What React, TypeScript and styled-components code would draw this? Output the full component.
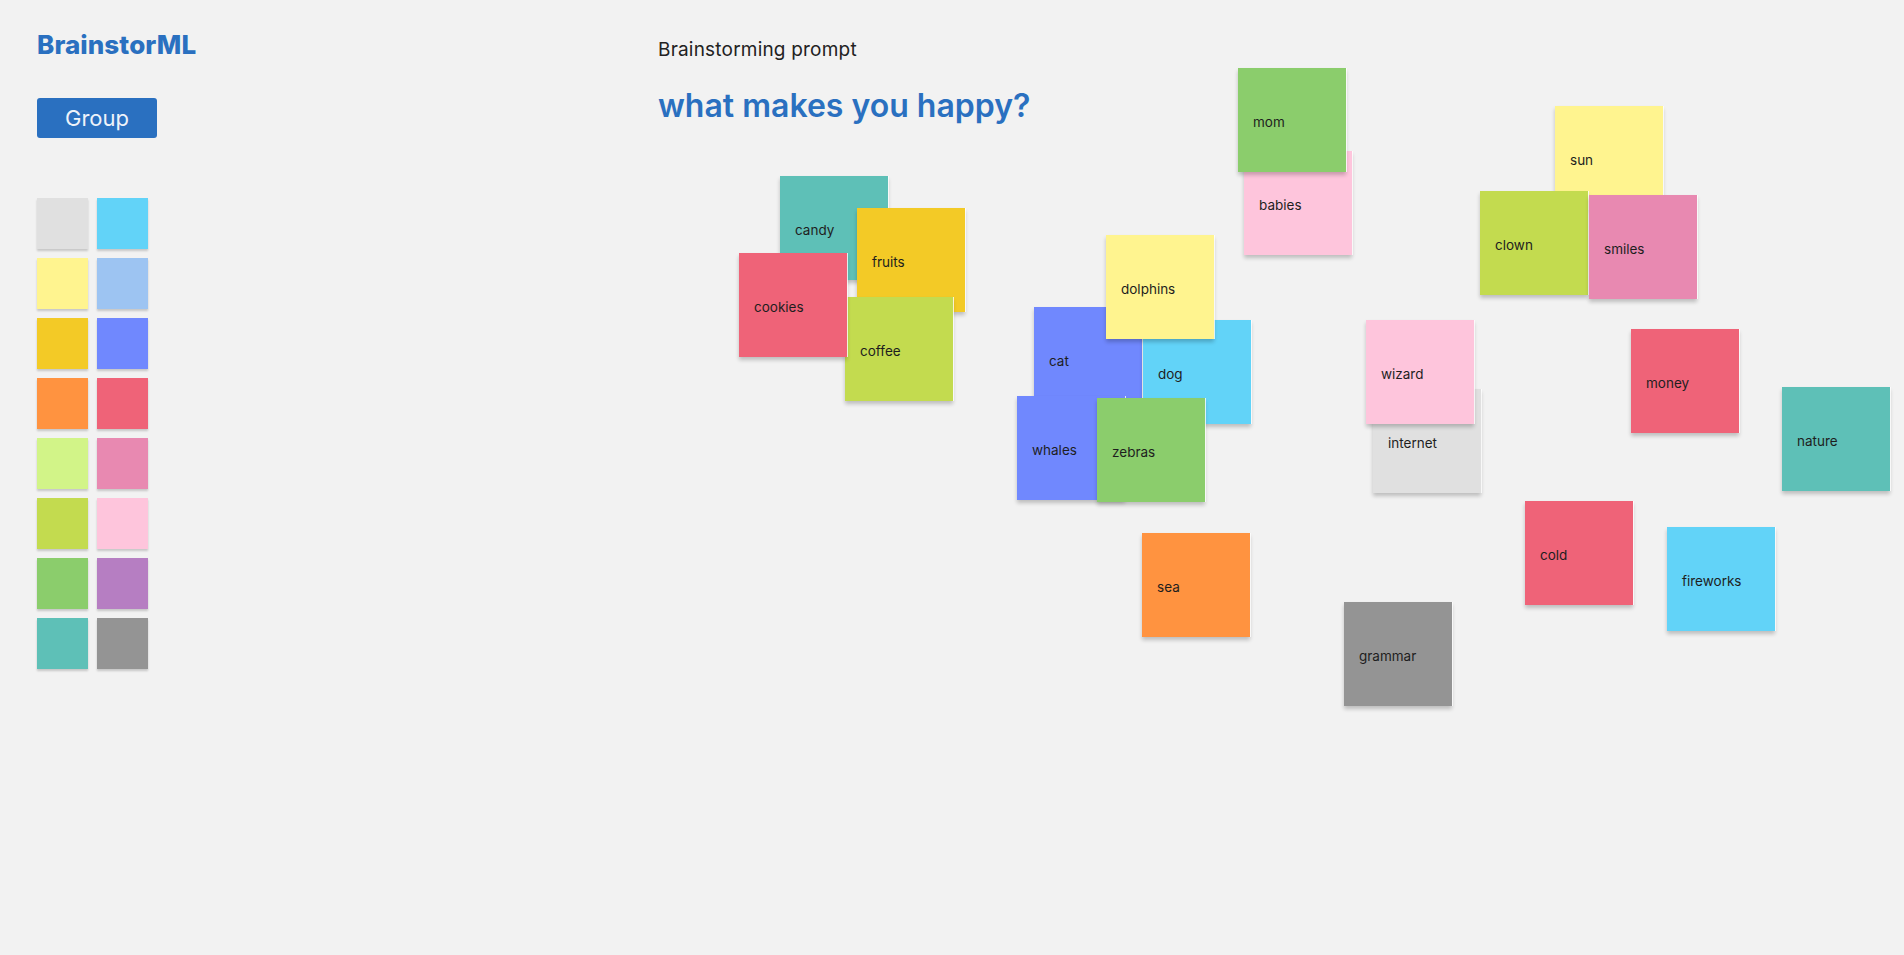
import React from 'react';
import styled, { createGlobalStyle } from 'styled-components';

type NoteModel = {
  id: string;
  x: number;
  y: number;
  color: string;
};

const GlobalStyle = createGlobalStyle`
  html,
  body {
    margin: 0;
    padding: 0;
    background: #f2f2f2;
    font-family: Inter, 'Open Sans', sans-serif;
  }
`;

const palette = [
  '#e0e0e0',
  '#62d3f8',
  '#fff48f',
  '#9dc4f2',
  '#f3ca26',
  '#7088fe',
  '#ff9340',
  '#ef6378',
  '#d2f488',
  '#e889b1',
  '#c3db4f',
  '#fec5dc',
  '#8bcd6c',
  '#b67ec2',
  '#5ec0b7',
  '#949494',
];

// later entries sit on top
const notes: NoteModel[] = [
  { id: 'candy', x: 780, y: 176, color: '#5ec0b7' },
  { id: 'fruits', x: 857, y: 208, color: '#f3ca26' },
  { id: 'coffee', x: 845, y: 297, color: '#c3db4f' },
  { id: 'cookies', x: 739, y: 253, color: '#ef6378' },
  { id: 'cat', x: 1034, y: 307, color: '#7088fe' },
  { id: 'dog', x: 1143, y: 320, color: '#62d3f8' },
  { id: 'dolphins', x: 1106, y: 235, color: '#fff48f' },
  { id: 'whales', x: 1017, y: 396, color: '#7088fe' },
  { id: 'zebras', x: 1097, y: 398, color: '#8bcd6c' },
  { id: 'babies', x: 1244, y: 151, color: '#fec5dc' },
  { id: 'mom', x: 1238, y: 68, color: '#8bcd6c' },
  { id: 'sun', x: 1555, y: 106, color: '#fff48f' },
  { id: 'clown', x: 1480, y: 191, color: '#c3db4f' },
  { id: 'smiles', x: 1589, y: 195, color: '#e889b1' },
  { id: 'internet', x: 1373, y: 389, color: '#e0e0e0' },
  { id: 'wizard', x: 1366, y: 320, color: '#fec5dc' },
  { id: 'money', x: 1631, y: 329, color: '#ef6378' },
  { id: 'nature', x: 1782, y: 387, color: '#5ec0b7' },
  { id: 'cold', x: 1525, y: 501, color: '#ef6378' },
  { id: 'fireworks', x: 1667, y: 527, color: '#62d3f8' },
  { id: 'sea', x: 1142, y: 533, color: '#ff9340' },
  { id: 'grammar', x: 1344, y: 602, color: '#949494' },
];

const Page = styled.div`
  position: relative;
  display: flex;
  min-height: 955px;
  box-sizing: border-box;
  padding: 27px 0 0 37px;
  overflow: hidden;
`;
const Sidebar = styled.aside`
  display: flex;
  flex-direction: column;
  align-items: flex-start;
  width: 621px;
  flex-shrink: 0;
`;
const Logo = styled.h1`
  margin: 0;
  font-size: 26px;
  line-height: 36px;
  font-weight: 800;
  letter-spacing: 0.1px;
  color: #2a70c0;
`;
const GroupButton = styled.button`
  margin-top: 35px;
  width: 120px;
  height: 40px;
  border: none;
  border-radius: 3px;
  background: #2a70c0;
  color: #eef3fa;
  font-family: inherit;
  font-size: 22px;
  font-weight: 400;
  cursor: pointer;
`;
const Swatches = styled.div`
  margin-top: 60px;
  display: grid;
  grid-template-columns: repeat(2, 51px);
  grid-auto-rows: 51px;
  column-gap: 9px;
  row-gap: 9px;
`;
const Swatch = styled.div<{ color: string }>`
  background: ${(p) => p.color};
  box-shadow: 0 2px 2px rgba(0, 0, 0, 0.18);
  cursor: pointer;
`;
const Prompt = styled.section`
  display: flex;
  flex-direction: column;
`;
const PromptLabel = styled.div`
  margin-top: 9px;
  font-size: 19px;
  line-height: 28px;
  letter-spacing: 0.2px;
  color: #222;
`;
const Question = styled.h2`
  margin: 22px 0 0;
  font-size: 32px;
  line-height: 40px;
  font-weight: 600;
  color: #2a70c0;
`;
const Note = styled.div<{ color: string }>`
  position: absolute;
  width: 108px;
  height: 104px;
  box-sizing: border-box;
  padding: 4px 15px 0;
  display: flex;
  align-items: center;
  background: ${(p) => p.color};
  box-shadow: 1px 0 0 rgba(255, 255, 255, 0.8), 0 3px 4px rgba(0, 0, 0, 0.22);
  font-size: 13.5px;
  color: #1e1e1e;
`;

const App = () => {
  return (
    <>
      <GlobalStyle />
      <Page>
        <Sidebar>
          <Logo>BrainstorML</Logo>
          <GroupButton>Group</GroupButton>
          <Swatches>
            {palette.map((c, i) => (
              <Swatch key={i} color={c} />
            ))}
          </Swatches>
        </Sidebar>
        <Prompt>
          <PromptLabel>Brainstorming prompt</PromptLabel>
          <Question>what makes you happy?</Question>
        </Prompt>
        {notes.map((n) => (
          <Note key={n.id} color={n.color} style={{ left: n.x, top: n.y }}>
            {n.id}
          </Note>
        ))}
      </Page>
    </>
  );
};

export default App;
